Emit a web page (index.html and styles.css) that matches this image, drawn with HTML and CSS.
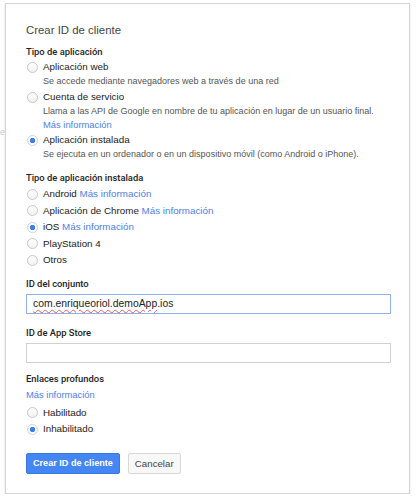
FILE: index.html
```html
<!DOCTYPE html>
<html lang="es">
<head>
    <meta charset="UTF-8">
    <meta name="viewport" content="width=device-width, initial-scale=1.0">
    <title>Crear ID de cliente</title>
    <link rel="stylesheet" href="styles.css">
</head>
<body>
    <span class="edge">e</span>
    <div class="card">
        <h1>Crear ID de cliente</h1>

        <div class="label first">Tipo de aplicación</div>
        <div class="option">
            <div class="row"><span class="radio"></span>Aplicación web</div>
            <div class="desc">Se accede mediante navegadores web a través de una red</div>
        </div>
        <div class="option">
            <div class="row"><span class="radio"></span>Cuenta de servicio</div>
            <div class="desc">Llama a las API de Google en nombre de tu aplicación en lugar de un usuario final.</div>
            <div class="desc-link"><a href="#">Más información</a></div>
        </div>
        <div class="option">
            <div class="row"><span class="radio checked"></span>Aplicación instalada</div>
            <div class="desc">Se ejecuta en un ordenador o en un dispositivo móvil (como Android o iPhone).</div>
        </div>

        <div class="label section">Tipo de aplicación instalada</div>
        <div class="list">
            <div class="row"><span class="radio"></span>Android&nbsp;<a href="#">Más información</a></div>
            <div class="row"><span class="radio"></span>Aplicación de Chrome&nbsp;<a href="#">Más información</a></div>
            <div class="row"><span class="radio checked"></span>iOS&nbsp;<a href="#">Más información</a></div>
            <div class="row"><span class="radio"></span>PlayStation 4</div>
            <div class="row"><span class="radio"></span>Otros</div>
        </div>

        <div class="label bundle">ID del conjunto</div>
        <div class="input focused"><span class="misspelled">com.enriqueoriol.demoApp</span>.ios</div>

        <div class="label store">ID de App Store</div>
        <div class="input"></div>

        <div class="label links">Enlaces profundos</div>
        <div class="more"><a href="#">Más información</a></div>
        <div class="list">
            <div class="row"><span class="radio"></span>Habilitado</div>
            <div class="row"><span class="radio checked"></span>Inhabilitado</div>
        </div>

        <div class="actions">
            <button class="primary">Crear ID de cliente</button>
            <button>Cancelar</button>
        </div>
    </div>
</body>
</html>
```

FILE: styles.css
```css
body {
    margin: 0;
    font-family: "Liberation Sans", Arial, sans-serif;
    background-color: #fff;
    color: #222;
    position: relative;
}
.edge {
    position: absolute;
    left: 0;
    top: 127px;
    font-size: 9px;
    color: #c8c8c8;
}
.card {
    margin: 3px 6px 0 5px;
    padding: 16px 20px 19px 20px;
    border: 1px solid #d4d4d4;
    box-shadow: 0 1px 2px rgba(0, 0, 0, 0.12);
}
h1 {
    margin: 0;
    font-size: 11.4px;
    font-weight: 400;
    line-height: 20px;
    color: #444;
}
.label {
    font-family: Roboto, "Liberation Sans", sans-serif;
    font-size: 9.4px;
    font-weight: 500;
    line-height: 16px;
    color: #222;
}
.label.first {
    margin-top: 4px;
}
.label.section {
    margin-top: 9px;
}
.label.bundle {
    margin-top: 7px;
}
.label.store {
    margin-top: 11px;
}
.label.links {
    margin-top: 8px;
}
.option {
    margin-bottom: 2px;
}
.row {
    display: flex;
    align-items: center;
    font-size: 9.8px;
    line-height: 14px;
    color: #222;
}
.list .row {
    line-height: 16.5px;
}
.desc {
    margin-top: 1px;
    padding-left: 17px;
    font-size: 9px;
    line-height: 13px;
    color: #555;
}
.desc-link {
    padding-left: 17px;
    font-size: 9.4px;
    line-height: 13px;
}
a {
    color: #4d7fe6;
    text-decoration: none;
}
.radio {
    box-sizing: border-box;
    width: 11px;
    height: 11px;
    margin: 0 5px 0 1px;
    border: 1px solid #c8c8c8;
    border-radius: 50%;
    background: linear-gradient(#fff, #f2f2f2);
    flex-shrink: 0;
}
.radio.checked {
    border-color: #d0d0d0;
    background: radial-gradient(circle, #3b7ff0 0, #3b7ff0 2.5px, #fff 3px);
}
.input {
    box-sizing: border-box;
    height: 20px;
    width: 365px;
    margin-top: 2px;
    padding: 0 6px;
    border: 1px solid #d0d0d0;
    font-size: 10.4px;
    line-height: 18px;
    color: #222;
}
.input.focused {
    border-color: #8fb0ec;
}
.misspelled {
    text-decoration: underline wavy #e25a5a;
    text-decoration-thickness: 1px;
    text-underline-offset: 2px;
}
.more {
    font-size: 9.4px;
    line-height: 14px;
    margin: 1px 0 3px;
}
.actions {
    display: flex;
    gap: 8px;
    margin-top: 15px;
}
button {
    height: 21px;
    padding: 0 6px;
    border: 1px solid #d8d8d8;
    border-radius: 2px;
    background-color: #f8f8f8;
    font-family: inherit;
    font-size: 9.7px;
    color: #444;
    cursor: pointer;
}
button.primary {
    padding: 0 6px;
    border-color: #3a78e6;
    background-color: #4486f4;
    color: #fff;
    font-size: 9.1px;
    font-weight: 700;
}
```
